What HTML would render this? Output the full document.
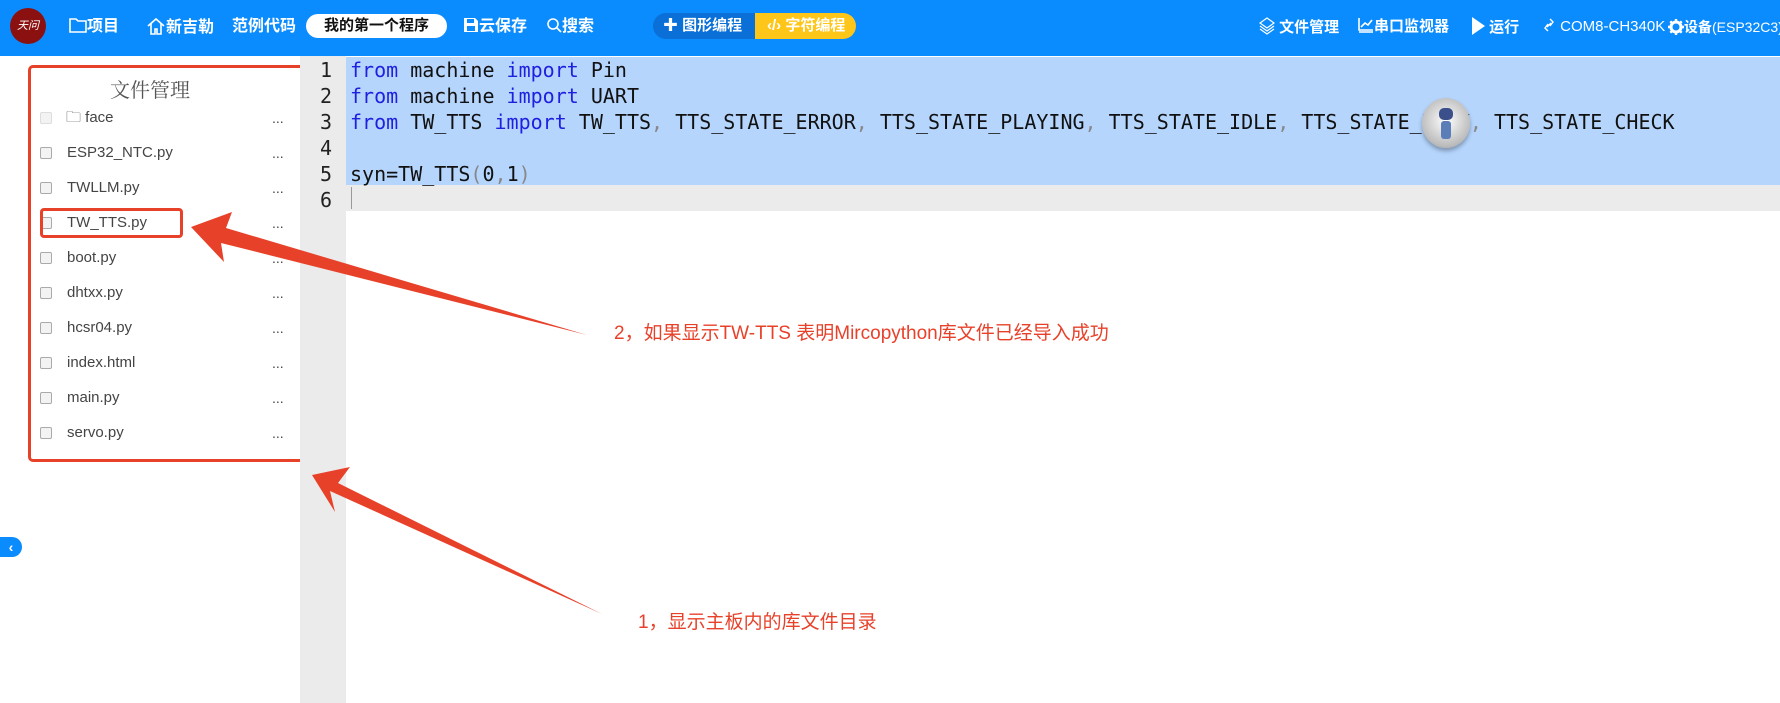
<!DOCTYPE html>
<html><head><meta charset="utf-8"><style>
*{margin:0;padding:0;box-sizing:border-box}
body{width:1780px;height:703px;overflow:hidden;background:#fff;font-family:"Liberation Sans","Noto Sans CJK SC",sans-serif;position:relative}
.hdr{position:absolute;left:0;top:0;width:1780px;height:56px;background:#0a8cff;color:#fff}
.hi{position:absolute;top:17px;font-size:16px;font-weight:bold;white-space:nowrap;line-height:20px}
.abs{position:absolute}
.code{font-family:"DejaVu Sans Mono","Liberation Mono",monospace;font-size:20px;white-space:pre;line-height:26px}
.kw{color:#1f1fe0}.p{color:#888}
.fi{position:absolute;left:40px;font-size:15px;color:#444;height:20px;line-height:20px}
.cb{position:absolute;left:0;top:4px;width:12px;height:12px;border:1px solid #aaa;border-radius:2px;background:#f3f3f3}
.dots{position:absolute;left:272px;font-size:14px;color:#444}
.note{position:absolute;color:#e8412a;font-size:19px;font-family:"Liberation Sans","Noto Sans CJK SC",sans-serif}
.nar{font-family:"Liberation Sans Narrow","Liberation Sans",sans-serif;font-weight:normal}
</style></head><body>
<div class="hdr">
 <div class="abs" style="left:10px;top:8px;width:36px;height:36px;border-radius:50%;background:#8b1111;color:#fff;font-size:11px;line-height:36px;text-align:center;font-style:italic">天问</div>
 <div class="hi" style="left:69px">
  <svg width="18" height="16" viewBox="0 0 18 16" style="vertical-align:-2px"><path d="M1 2h6l2 2h8v11H1z" fill="none" stroke="#fff" stroke-width="1.6"/></svg>项目</div>
 <div class="hi" style="left:146px"><svg width="20" height="18" viewBox="0 0 20 18" style="vertical-align:-3px"><path d="M2 9L10 2l8 7M5 7v10h4v-5h2v5h4V7" fill="none" stroke="#fff" stroke-width="1.6"/></svg>新吉勒</div>
 <div class="hi" style="left:232px">范例代码</div>
 <div class="abs" style="left:306px;top:14px;width:141px;height:24px;background:#fff;border-radius:12px;color:#111;font-size:15px;font-weight:bold;text-align:center;line-height:24px">我的第一个程序</div>
 <div class="hi" style="left:463px"><svg width="16" height="16" viewBox="0 0 16 16" style="vertical-align:-2px"><path d="M1 1h11l3 3v11H1z" fill="#fff"/><rect x="4" y="2" width="7" height="4" fill="#0a8cff"/><rect x="4" y="9" width="8" height="5" fill="#0a8cff"/></svg>云保存</div>
 <div class="hi" style="left:546px"><svg width="16" height="16" viewBox="0 0 16 16" style="vertical-align:-2px"><circle cx="7" cy="7" r="5" fill="none" stroke="#fff" stroke-width="1.6"/><path d="M11 11l4 4" stroke="#fff" stroke-width="1.6"/></svg>搜索</div>
 <div class="abs" style="left:653px;top:13px;width:203px;height:26px;border-radius:13px;background:#0a6fd6;overflow:hidden">
  <div class="abs" style="left:102px;top:0;width:101px;height:26px;background:#ffc61a"></div>
  <div class="hi" style="left:10px;top:3px;font-size:15px">✚ 图形编程</div>
  <div class="hi" style="left:114px;top:3px;font-size:15px">‹/› 字符编程</div>
 </div>
 <div class="hi" style="left:1259px;font-size:15px"><svg width="16" height="18" viewBox="0 0 16 18" style="vertical-align:-3px"><path d="M8 1l7 5-7 5-7-5zM1 9l7 5 7-5M1 12l7 5 7-5" fill="none" stroke="#fff" stroke-width="1.2"/></svg> 文件管理</div>
 <div class="hi" style="left:1358px;font-size:15px"><svg width="16" height="16" viewBox="0 0 16 16" style="vertical-align:-2px"><path d="M1 1v12h14M1 15h14M3 10l4-4 3 2 4-5" fill="none" stroke="#fff" stroke-width="1.6"/></svg>串口监视器</div>
 <div class="hi" style="left:1471px;font-size:15px"><svg width="14" height="18" viewBox="0 0 14 18" style="vertical-align:-3px"><path d="M1 0l13 9-13 9z" fill="#fff"/></svg> 运行</div>
 <div class="hi nar" style="left:1542px;font-size:15px"><svg width="14" height="16" viewBox="0 0 14 16" style="vertical-align:-2px"><path d="M8 2l3 3-3 4M6 14l-3-3 3-4M5 10l4-4" fill="none" stroke="#fff" stroke-width="1.4"/></svg> COM8-CH340K</div>
 <div class="hi" style="left:1668px;font-size:14px"><svg width="16" height="16" viewBox="0 0 16 16" style="vertical-align:-3px"><circle cx="8" cy="8" r="5" fill="none" stroke="#fff" stroke-width="3"/><path d="M8 0v4M8 12v4M0 8h4M12 8h4M2.3 2.3l3 3M10.7 10.7l3 3M2.3 13.7l3-3M10.7 5.3l3-3" stroke="#fff" stroke-width="2.4"/></svg>设备<span class="nar" style="font-size:14px">(ESP32C3)</span></div>
</div>

<div class="abs" style="left:28px;top:65px;width:277px;height:397px;border:3px solid #e8412a;border-radius:5px"></div>
<div class="abs" style="left:110px;top:74px;font-size:20px;color:#555;font-family:'Liberation Serif','Noto Serif CJK SC',serif">文件管理</div>
<div class="fi" style="top:108px"><span class="cb" style="border-color:#ddd"></span><span style="position:absolute;left:26px;white-space:nowrap">🗀 face</span></div>
<div class="fi" style="top:143px"><span class="cb"></span><span style="position:absolute;left:27px">ESP32_NTC.py</span></div>
<div class="fi" style="top:178px"><span class="cb"></span><span style="position:absolute;left:27px">TWLLM.py</span></div>
<div class="fi" style="top:213px"><span class="cb"></span><span style="position:absolute;left:27px">TW_TTS.py</span></div>
<div class="fi" style="top:248px"><span class="cb"></span><span style="position:absolute;left:27px">boot.py</span></div>
<div class="fi" style="top:283px"><span class="cb"></span><span style="position:absolute;left:27px">dhtxx.py</span></div>
<div class="fi" style="top:318px"><span class="cb"></span><span style="position:absolute;left:27px">hcsr04.py</span></div>
<div class="fi" style="top:353px"><span class="cb"></span><span style="position:absolute;left:27px">index.html</span></div>
<div class="fi" style="top:388px"><span class="cb"></span><span style="position:absolute;left:27px">main.py</span></div>
<div class="fi" style="top:423px"><span class="cb"></span><span style="position:absolute;left:27px">servo.py</span></div>
<div class="dots" style="top:110px">...</div><div class="dots" style="top:145px">...</div><div class="dots" style="top:180px">...</div><div class="dots" style="top:215px">...</div><div class="dots" style="top:250px">...</div><div class="dots" style="top:285px">...</div><div class="dots" style="top:320px">...</div><div class="dots" style="top:355px">...</div><div class="dots" style="top:390px">...</div><div class="dots" style="top:425px">...</div>
<div class="abs" style="left:40px;top:208px;width:143px;height:30px;border:3px solid #e8412a;border-radius:4px"></div>

<div class="abs" style="left:300px;top:56px;width:46px;height:647px;background:#ebebeb"></div>
<div class="abs" style="left:346px;top:57px;width:1434px;height:128px;background:#b5d5fd"></div>
<div class="abs" style="left:300px;top:185px;width:1480px;height:26px;background:#ebebeb"></div>
<div class="abs" style="left:351px;top:187px;width:1px;height:22px;background:#999"></div>
<div class="abs code" style="left:320px;top:57px;color:#222">1
2
3
4
5
6</div>
<div class="abs code" style="left:350px;top:57px;color:#111"><span class="kw">from</span> machine <span class="kw">import</span> Pin
<span class="kw">from</span> machine <span class="kw">import</span> UART
<span class="kw">from</span> TW_TTS <span class="kw">import</span> TW_TTS<span class="p">,</span> TTS_STATE_ERROR<span class="p">,</span> TTS_STATE_PLAYING<span class="p">,</span> TTS_STATE_IDLE<span class="p">,</span> TTS_STATE_BUSY<span class="p">,</span> TTS_STATE_CHECK

syn=TW_TTS<span class="p">(</span>0<span class="p">,</span>1<span class="p">)</span></div>
<div class="abs" style="left:1422px;top:98px;width:48px;height:50px;border-radius:50%;background:radial-gradient(circle at 50% 45%,#fff,#bbb 70%,#888);box-shadow:0 3px 4px rgba(0,0,0,.3)"><div class="abs" style="left:17px;top:10px;width:14px;height:12px;border-radius:5px;background:#3b4f8a"></div><div class="abs" style="left:19px;top:23px;width:10px;height:18px;border-radius:3px;background:#5b7db8"></div></div>

<svg class="abs" style="left:0;top:0" width="1780" height="703">
 <polygon points="191,227 232,212 226,228 587,335 221,243 224,262" fill="#e8412a"/>
 <polygon points="312,475 350,467 338,483 602,614 330,491 335,512" fill="#e8412a"/>
</svg>
<div class="note" style="left:614px;top:318px">2，如果显示TW-TTS 表明Mircopython库文件已经导入成功</div>
<div class="note" style="left:638px;top:607px">1，显示主板内的库文件目录</div>
<div class="abs" style="left:0;top:537px;width:22px;height:20px;border-radius:0 10px 10px 0;background:#0a8cff;color:#fff;font-size:14px;font-weight:bold;line-height:20px;text-align:center">‹</div>
</body></html>
